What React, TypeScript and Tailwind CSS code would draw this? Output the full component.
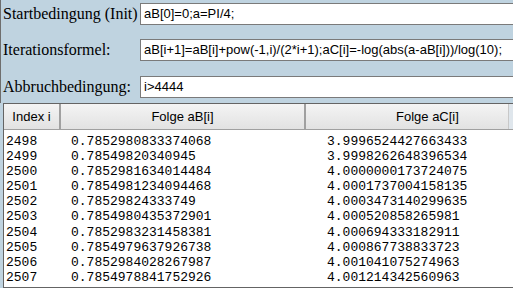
const rows: [string, string, string][] = [
  ["2498", "0.7852980833374068", "3.9996524427663433"],
  ["2499", "0.78549820340945", "3.9998262648396534"],
  ["2500", "0.7852981634014484", "4.0000000173724075"],
  ["2501", "0.7854981234094468", "4.0001737004158135"],
  ["2502", "0.78529824333749", "4.0003473140299635"],
  ["2503", "0.7854980435372901", "4.000520858265981"],
  ["2504", "0.7852983231458381", "4.000694333182911"],
  ["2505", "0.7854979637926738", "4.000867738833723"],
  ["2506", "0.7852984028267987", "4.001041075274963"],
  ["2507", "0.7854978841752926", "4.001214342560963"],
];

function FieldRow({ label, value, top }: { label: string; value: string; top: string }) {
  return (
    <div className={`flex items-center h-[22px] ${top}`}>
      <div className="w-[139px] shrink-0 pl-[2px] text-[16px] leading-none text-black font-['Liberation_Serif',serif] whitespace-nowrap">
        {label}
      </div>
      <div className="flex-1 h-[22px] bg-white border border-[#7a7a7a] border-r-0 pl-[3px] flex items-center text-[13px] text-black font-['Liberation_Sans',Arial,sans-serif] whitespace-nowrap overflow-hidden">
        {value}
      </div>
    </div>
  );
}

export default function App() {
  return (
    <div className="w-[513px] h-[288px] bg-[#bfd3e0] overflow-hidden flex flex-col">
      <div className="border-l border-[#6e6e6e] pt-[3px] h-[103px] shrink-0">
        <FieldRow label="Startbedingung (Init)" value="aB[0]=0;a=PI/4;" top="" />
        <FieldRow
          label="Iterationsformel:"
          value="aB[i+1]=aB[i]+pow(-1,i)/(2*i+1);aC[i]=-log(abs(a-aB[i]))/log(10);"
          top="mt-[14px]"
        />
        <FieldRow label="Abbruchbedingung:" value="i>4444" top="mt-[15px]" />
      </div>

      <div className="ml-[3px] flex-1 bg-white border-l border-t border-b border-[#646464] flex flex-col overflow-hidden">
        <div className="flex h-[26px] shrink-0 bg-gradient-to-b from-[#f4f4f4] to-[#e2e2e2] border-b border-[#a0a0a0] text-[13px] text-black font-['Liberation_Sans',Arial,sans-serif]">
          <div className="w-[57px] shrink-0 flex items-center justify-center border-r-2 border-[#a0a0a0]">
            Index i
          </div>
          <div className="w-[245px] shrink-0 flex items-center justify-center border-r-2 border-[#a0a0a0]">
            Folge aB[i]
          </div>
          <div className="w-[203px] shrink-0 flex items-center pl-[90px] border-r border-[#c8c8c8]">
            Folge aC[i]
          </div>
          <div className="flex-1 bg-[#dfe6ec]" />
        </div>
        <div className="pt-[4px] font-['Liberation_Mono','Courier_New',monospace] text-[13px] leading-[15px] text-black">
          {rows.map(([i, b, c]) => (
            <div key={i} className="flex h-[15.1px] whitespace-nowrap">
              <div className="w-[67px] shrink-0 pl-[2px]">{i}</div>
              <div className="w-[256px] shrink-0">{b}</div>
              <div>{c}</div>
            </div>
          ))}
        </div>
      </div>
    </div>
  );
}
